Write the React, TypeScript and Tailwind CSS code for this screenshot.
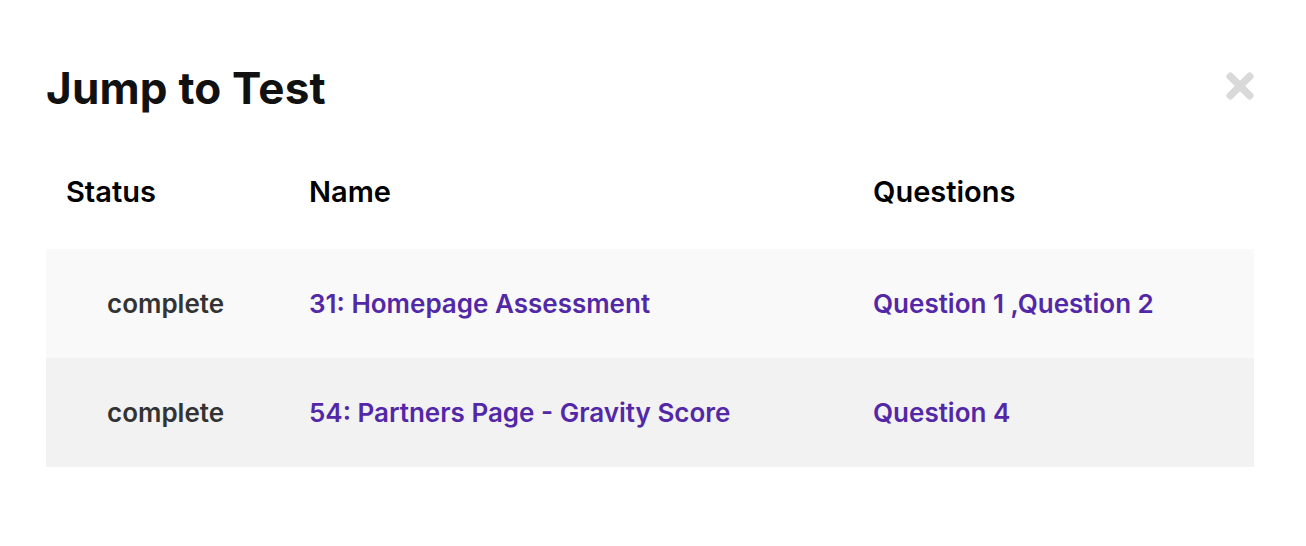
import { FaTimes } from 'react-icons/fa';

const rows = [
	{ status: 'complete', name: '31: Homepage Assessment', questions: 'Question 1 ,Question 2', bg: 'bg-[#f9f9f9]' },
	{ status: 'complete', name: '54: Partners Page - Gravity Score', questions: 'Question 4', bg: 'bg-[#f2f2f2]' },
];

const App = () => {
	return (
		<div className="w-[1306px] h-[546px] bg-white pl-[46px] pr-[52px] pt-[60px] font-['Inter',sans-serif]">
			<header className="flex items-start justify-between">
				<h1 className="text-[44px] leading-[56px] font-bold text-[#111] tracking-[0.2px]">Jump to Test</h1>
				<button className="mt-[6px] mr-[-6px] text-[#d9d9d9]">
					<FaTimes className="block w-[40px] h-[40px]" />
				</button>
			</header>

			<table className="w-full mt-[19px] border-collapse">
				<thead>
					<tr className="text-left text-[29px] text-black">
						<th className="pl-[20px] w-[263px] h-[114px] font-semibold">Status</th>
						<th className="w-[564px] font-semibold">Name</th>
						<th className="font-semibold">Questions</th>
					</tr>
				</thead>
				<tbody>
					{rows.map((row) => (
						<tr key={row.name} className={`${row.bg} h-[109px] text-[26px] font-semibold`}>
							<td className="pl-[61px] text-[#333]">{row.status}</td>
							<td className="text-[#5228a8]">{row.name}</td>
							<td className="text-[#5228a8]">{row.questions}</td>
						</tr>
					))}
				</tbody>
			</table>
		</div>
	);
};

export default App;
